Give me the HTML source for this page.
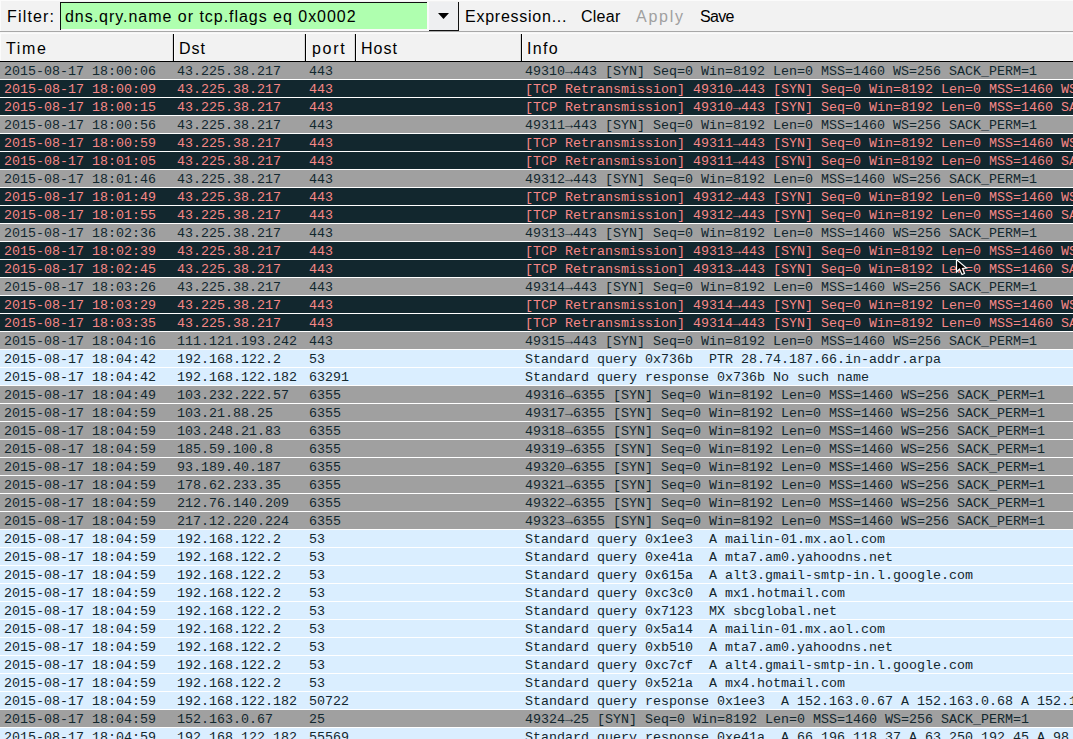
<!DOCTYPE html>
<html><head><meta charset="utf-8">
<style>
html,body{margin:0;padding:0;}
body{width:1073px;height:739px;overflow:hidden;position:relative;background:#ffffff;font-family:"Liberation Sans",sans-serif;}
.bar{position:absolute;left:0;top:0;width:1073px;height:31px;background:#f2f2f2;}
.sans{position:absolute;font-family:"Liberation Sans",sans-serif;font-size:16px;line-height:20px;white-space:pre;color:#000;}
.hl{position:absolute;left:0;top:31px;width:1073px;height:1px;background:#a8a8a8;}
.hdr{position:absolute;left:0;top:34px;width:1073px;height:27px;background:#f2f2f2;border-bottom:1px solid #000;}
.sep{position:absolute;top:34px;width:1px;height:27px;background:#000;}
.r{position:absolute;left:0;width:1073px;height:17px;}
.r i{position:absolute;top:1px;font-style:normal;font-family:"Liberation Mono",monospace;font-size:13.333px;line-height:17px;white-space:pre;}
.g{background:#a0a0a0;color:#12272e;}
.d{background:#12272e;color:#f78787;}
.b{background:#daeeff;color:#12272e;}
</style></head><body>
<div class="bar"></div>
<div style="position:absolute;left:0;top:0;width:1073px;height:1px;background:#fbfbfb"></div>
<div style="position:absolute;left:0;top:0;width:1px;height:31px;background:#fbfbfb"></div>
<div class="sans" style="left:7px;top:7px;letter-spacing:1.17px">Filter:</div>
<div style="position:absolute;left:60px;top:2px;width:367px;height:27px;background:#afffaf;border-left:1px solid #111;border-top:1px solid #111;box-sizing:border-box;"></div>
<div style="position:absolute;left:61px;top:29px;width:368px;height:2px;background:#fafafa;"></div>
<div style="position:absolute;left:60px;top:29px;width:1px;height:1px;background:#111;"></div>
<div style="position:absolute;left:0;top:32px;width:1073px;height:1px;background:#f6f6f6"></div>
<div style="position:absolute;left:0;top:33px;width:1073px;height:1px;background:#fbfbfb"></div>
<div style="position:absolute;left:427px;top:2px;width:2px;height:29px;background:#fafafa;"></div>
<div class="sans" style="left:65px;top:7px;letter-spacing:0.97px">dns.qry.name or tcp.flags eq 0x0002</div>
<div style="position:absolute;left:429px;top:2px;width:30px;height:29px;background:#eeeff1;border-right:1px solid #111;border-bottom:1px solid #111;box-sizing:border-box;"></div>
<svg style="position:absolute;left:437px;top:12px" width="13" height="8"><path d="M1 1 L12 1 L6.5 7 Z" fill="#000"/></svg>
<div class="sans" style="left:465px;top:7px;letter-spacing:0.75px">Expression...</div>
<div class="sans" style="left:581px;top:7px;letter-spacing:0.25px">Clear</div>
<div class="sans" style="left:636px;top:7px;color:#a0a0a0;letter-spacing:1.75px">Apply</div>
<div class="sans" style="left:700px;top:7px;letter-spacing:-0.67px">Save</div>
<div class="hl"></div>
<div class="hdr"></div>
<div style="position:absolute;left:0;top:34px;width:1px;height:27px;background:#fbfbfb"></div>
<div style="position:absolute;left:0;top:60px;width:1073px;height:1px;background:#f8f8f8"></div>
<div class="sep" style="left:172px;background:#dadada"></div><div class="sep" style="left:173px"></div><div class="sep" style="left:174px;background:#fbfbfb"></div>
<div class="sep" style="left:304px;background:#dadada"></div><div class="sep" style="left:305px"></div><div class="sep" style="left:306px;background:#fbfbfb"></div>
<div class="sep" style="left:354px;background:#dadada"></div><div class="sep" style="left:355px"></div><div class="sep" style="left:356px;background:#fbfbfb"></div>
<div class="sep" style="left:520px;background:#dadada"></div><div class="sep" style="left:521px"></div><div class="sep" style="left:522px;background:#fbfbfb"></div>

<div class="sans" style="left:6px;top:39px;letter-spacing:1.67px">Time</div>
<div class="sans" style="left:179px;top:39px;letter-spacing:1px">Dst</div>
<div class="sans" style="left:312px;top:39px;letter-spacing:1.67px">port</div>
<div class="sans" style="left:361px;top:39px;letter-spacing:1px">Host</div>
<div class="sans" style="left:527px;top:39px;letter-spacing:1.33px">Info</div>
<div class="r g" style="top:62px"><i style="left:4px">2015-08-17 18:00:06</i><i style="left:177px">43.225.38.217</i><i style="left:309px">443</i><i style="left:525px">49310→443 [SYN] Seq=0 Win=8192 Len=0 MSS=1460 WS=256 SACK_PERM=1</i></div>
<div class="r d" style="top:80px"><i style="left:4px">2015-08-17 18:00:09</i><i style="left:177px">43.225.38.217</i><i style="left:309px">443</i><i style="left:525px">[TCP Retransmission] 49310→443 [SYN] Seq=0 Win=8192 Len=0 MSS=1460 WS=256 SACK_PERM=1</i></div>
<div class="r d" style="top:98px"><i style="left:4px">2015-08-17 18:00:15</i><i style="left:177px">43.225.38.217</i><i style="left:309px">443</i><i style="left:525px">[TCP Retransmission] 49310→443 [SYN] Seq=0 Win=8192 Len=0 MSS=1460 SACK_PERM=1</i></div>
<div class="r g" style="top:116px"><i style="left:4px">2015-08-17 18:00:56</i><i style="left:177px">43.225.38.217</i><i style="left:309px">443</i><i style="left:525px">49311→443 [SYN] Seq=0 Win=8192 Len=0 MSS=1460 WS=256 SACK_PERM=1</i></div>
<div class="r d" style="top:134px"><i style="left:4px">2015-08-17 18:00:59</i><i style="left:177px">43.225.38.217</i><i style="left:309px">443</i><i style="left:525px">[TCP Retransmission] 49311→443 [SYN] Seq=0 Win=8192 Len=0 MSS=1460 WS=256 SACK_PERM=1</i></div>
<div class="r d" style="top:152px"><i style="left:4px">2015-08-17 18:01:05</i><i style="left:177px">43.225.38.217</i><i style="left:309px">443</i><i style="left:525px">[TCP Retransmission] 49311→443 [SYN] Seq=0 Win=8192 Len=0 MSS=1460 SACK_PERM=1</i></div>
<div class="r g" style="top:170px"><i style="left:4px">2015-08-17 18:01:46</i><i style="left:177px">43.225.38.217</i><i style="left:309px">443</i><i style="left:525px">49312→443 [SYN] Seq=0 Win=8192 Len=0 MSS=1460 WS=256 SACK_PERM=1</i></div>
<div class="r d" style="top:188px"><i style="left:4px">2015-08-17 18:01:49</i><i style="left:177px">43.225.38.217</i><i style="left:309px">443</i><i style="left:525px">[TCP Retransmission] 49312→443 [SYN] Seq=0 Win=8192 Len=0 MSS=1460 WS=256 SACK_PERM=1</i></div>
<div class="r d" style="top:206px"><i style="left:4px">2015-08-17 18:01:55</i><i style="left:177px">43.225.38.217</i><i style="left:309px">443</i><i style="left:525px">[TCP Retransmission] 49312→443 [SYN] Seq=0 Win=8192 Len=0 MSS=1460 SACK_PERM=1</i></div>
<div class="r g" style="top:224px"><i style="left:4px">2015-08-17 18:02:36</i><i style="left:177px">43.225.38.217</i><i style="left:309px">443</i><i style="left:525px">49313→443 [SYN] Seq=0 Win=8192 Len=0 MSS=1460 WS=256 SACK_PERM=1</i></div>
<div class="r d" style="top:242px"><i style="left:4px">2015-08-17 18:02:39</i><i style="left:177px">43.225.38.217</i><i style="left:309px">443</i><i style="left:525px">[TCP Retransmission] 49313→443 [SYN] Seq=0 Win=8192 Len=0 MSS=1460 WS=256 SACK_PERM=1</i></div>
<div class="r d" style="top:260px"><i style="left:4px">2015-08-17 18:02:45</i><i style="left:177px">43.225.38.217</i><i style="left:309px">443</i><i style="left:525px">[TCP Retransmission] 49313→443 [SYN] Seq=0 Win=8192 Len=0 MSS=1460 SACK_PERM=1</i></div>
<div class="r g" style="top:278px"><i style="left:4px">2015-08-17 18:03:26</i><i style="left:177px">43.225.38.217</i><i style="left:309px">443</i><i style="left:525px">49314→443 [SYN] Seq=0 Win=8192 Len=0 MSS=1460 WS=256 SACK_PERM=1</i></div>
<div class="r d" style="top:296px"><i style="left:4px">2015-08-17 18:03:29</i><i style="left:177px">43.225.38.217</i><i style="left:309px">443</i><i style="left:525px">[TCP Retransmission] 49314→443 [SYN] Seq=0 Win=8192 Len=0 MSS=1460 WS=256 SACK_PERM=1</i></div>
<div class="r d" style="top:314px"><i style="left:4px">2015-08-17 18:03:35</i><i style="left:177px">43.225.38.217</i><i style="left:309px">443</i><i style="left:525px">[TCP Retransmission] 49314→443 [SYN] Seq=0 Win=8192 Len=0 MSS=1460 SACK_PERM=1</i></div>
<div class="r g" style="top:332px"><i style="left:4px">2015-08-17 18:04:16</i><i style="left:177px">111.121.193.242</i><i style="left:309px">443</i><i style="left:525px">49315→443 [SYN] Seq=0 Win=8192 Len=0 MSS=1460 WS=256 SACK_PERM=1</i></div>
<div class="r b" style="top:350px"><i style="left:4px">2015-08-17 18:04:42</i><i style="left:177px">192.168.122.2</i><i style="left:309px">53</i><i style="left:525px">Standard query 0x736b  PTR 28.74.187.66.in-addr.arpa</i></div>
<div class="r b" style="top:368px"><i style="left:4px">2015-08-17 18:04:42</i><i style="left:177px">192.168.122.182</i><i style="left:309px">63291</i><i style="left:525px">Standard query response 0x736b No such name</i></div>
<div class="r g" style="top:386px"><i style="left:4px">2015-08-17 18:04:49</i><i style="left:177px">103.232.222.57</i><i style="left:309px">6355</i><i style="left:525px">49316→6355 [SYN] Seq=0 Win=8192 Len=0 MSS=1460 WS=256 SACK_PERM=1</i></div>
<div class="r g" style="top:404px"><i style="left:4px">2015-08-17 18:04:59</i><i style="left:177px">103.21.88.25</i><i style="left:309px">6355</i><i style="left:525px">49317→6355 [SYN] Seq=0 Win=8192 Len=0 MSS=1460 WS=256 SACK_PERM=1</i></div>
<div class="r g" style="top:422px"><i style="left:4px">2015-08-17 18:04:59</i><i style="left:177px">103.248.21.83</i><i style="left:309px">6355</i><i style="left:525px">49318→6355 [SYN] Seq=0 Win=8192 Len=0 MSS=1460 WS=256 SACK_PERM=1</i></div>
<div class="r g" style="top:440px"><i style="left:4px">2015-08-17 18:04:59</i><i style="left:177px">185.59.100.8</i><i style="left:309px">6355</i><i style="left:525px">49319→6355 [SYN] Seq=0 Win=8192 Len=0 MSS=1460 WS=256 SACK_PERM=1</i></div>
<div class="r g" style="top:458px"><i style="left:4px">2015-08-17 18:04:59</i><i style="left:177px">93.189.40.187</i><i style="left:309px">6355</i><i style="left:525px">49320→6355 [SYN] Seq=0 Win=8192 Len=0 MSS=1460 WS=256 SACK_PERM=1</i></div>
<div class="r g" style="top:476px"><i style="left:4px">2015-08-17 18:04:59</i><i style="left:177px">178.62.233.35</i><i style="left:309px">6355</i><i style="left:525px">49321→6355 [SYN] Seq=0 Win=8192 Len=0 MSS=1460 WS=256 SACK_PERM=1</i></div>
<div class="r g" style="top:494px"><i style="left:4px">2015-08-17 18:04:59</i><i style="left:177px">212.76.140.209</i><i style="left:309px">6355</i><i style="left:525px">49322→6355 [SYN] Seq=0 Win=8192 Len=0 MSS=1460 WS=256 SACK_PERM=1</i></div>
<div class="r g" style="top:512px"><i style="left:4px">2015-08-17 18:04:59</i><i style="left:177px">217.12.220.224</i><i style="left:309px">6355</i><i style="left:525px">49323→6355 [SYN] Seq=0 Win=8192 Len=0 MSS=1460 WS=256 SACK_PERM=1</i></div>
<div class="r b" style="top:530px"><i style="left:4px">2015-08-17 18:04:59</i><i style="left:177px">192.168.122.2</i><i style="left:309px">53</i><i style="left:525px">Standard query 0x1ee3  A mailin-01.mx.aol.com</i></div>
<div class="r b" style="top:548px"><i style="left:4px">2015-08-17 18:04:59</i><i style="left:177px">192.168.122.2</i><i style="left:309px">53</i><i style="left:525px">Standard query 0xe41a  A mta7.am0.yahoodns.net</i></div>
<div class="r b" style="top:566px"><i style="left:4px">2015-08-17 18:04:59</i><i style="left:177px">192.168.122.2</i><i style="left:309px">53</i><i style="left:525px">Standard query 0x615a  A alt3.gmail-smtp-in.l.google.com</i></div>
<div class="r b" style="top:584px"><i style="left:4px">2015-08-17 18:04:59</i><i style="left:177px">192.168.122.2</i><i style="left:309px">53</i><i style="left:525px">Standard query 0xc3c0  A mx1.hotmail.com</i></div>
<div class="r b" style="top:602px"><i style="left:4px">2015-08-17 18:04:59</i><i style="left:177px">192.168.122.2</i><i style="left:309px">53</i><i style="left:525px">Standard query 0x7123  MX sbcglobal.net</i></div>
<div class="r b" style="top:620px"><i style="left:4px">2015-08-17 18:04:59</i><i style="left:177px">192.168.122.2</i><i style="left:309px">53</i><i style="left:525px">Standard query 0x5a14  A mailin-01.mx.aol.com</i></div>
<div class="r b" style="top:638px"><i style="left:4px">2015-08-17 18:04:59</i><i style="left:177px">192.168.122.2</i><i style="left:309px">53</i><i style="left:525px">Standard query 0xb510  A mta7.am0.yahoodns.net</i></div>
<div class="r b" style="top:656px"><i style="left:4px">2015-08-17 18:04:59</i><i style="left:177px">192.168.122.2</i><i style="left:309px">53</i><i style="left:525px">Standard query 0xc7cf  A alt4.gmail-smtp-in.l.google.com</i></div>
<div class="r b" style="top:674px"><i style="left:4px">2015-08-17 18:04:59</i><i style="left:177px">192.168.122.2</i><i style="left:309px">53</i><i style="left:525px">Standard query 0x521a  A mx4.hotmail.com</i></div>
<div class="r b" style="top:692px"><i style="left:4px">2015-08-17 18:04:59</i><i style="left:177px">192.168.122.182</i><i style="left:309px">50722</i><i style="left:525px">Standard query response 0x1ee3  A 152.163.0.67 A 152.163.0.68 A 152.163.0.69</i></div>
<div class="r g" style="top:710px"><i style="left:4px">2015-08-17 18:04:59</i><i style="left:177px">152.163.0.67</i><i style="left:309px">25</i><i style="left:525px">49324→25 [SYN] Seq=0 Win=8192 Len=0 MSS=1460 WS=256 SACK_PERM=1</i></div>
<div class="r b" style="top:728px"><i style="left:4px">2015-08-17 18:04:59</i><i style="left:177px">192.168.122.182</i><i style="left:309px">55569</i><i style="left:525px">Standard query response 0xe41a  A 66.196.118.37 A 63.250.192.45 A 98.138.112.32</i></div>
<svg style="position:absolute;left:950px;top:255px" width="24" height="24"><path d="M6.5 4.5 L6.5 17 L9.5 14 L12 19.5 L14.5 18.5 L12.5 13.5 L16.5 13 Z" fill="#000" stroke="#fff" stroke-width="1.2" stroke-linejoin="miter"/></svg>
</body></html>
